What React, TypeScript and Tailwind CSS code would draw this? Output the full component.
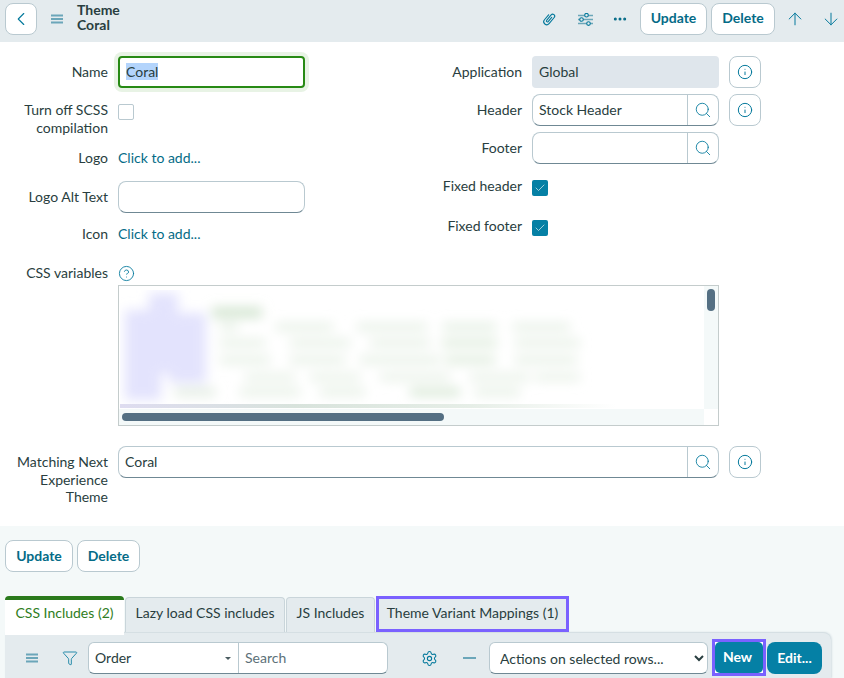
import { ArrowDown, ArrowUp, Check, ChevronLeft, CircleHelp, Ellipsis, Funnel, Info, Search, Settings } from "lucide-react";
import type { ReactNode } from "react";

function MenuIcon() {
  return (
    <svg width="12" height="10" viewBox="0 0 12 10" className="text-[#6ba6b9]" fill="currentColor">
      <rect x="0" y="0.5" width="12" height="2" />
      <rect x="0" y="4" width="12" height="2" />
      <rect x="0" y="7.5" width="12" height="2" />
    </svg>
  );
}

function ClipIcon() {
  return (
    <svg width="16" height="16" viewBox="0 0 16 16" fill="none" stroke="#04799c" strokeWidth="1.1" strokeLinecap="round">
      <path transform="rotate(40 8 8)" d="M5 5V11.5a3 3 0 0 0 6 0V3.5a2 2 0 0 0-4 0V10.5a1 1 0 0 0 2 0V5" />
    </svg>
  );
}

function SlidersIcon() {
  return (
    <svg width="15" height="13" viewBox="0 0 15 13" fill="none">
      <path d="M0 2.5H15M0 6.5H15M0 10.5H15" stroke="#6ba6b9" strokeWidth="1.6" />
      <circle cx="8.5" cy="2.2" r="1.8" fill="#e4ebee" stroke="#04799c" strokeWidth="1.1" />
      <circle cx="3.5" cy="6.5" r="1.8" fill="#e4ebee" stroke="#04799c" strokeWidth="1.1" />
      <circle cx="10.5" cy="10.6" r="1.8" fill="#e4ebee" stroke="#04799c" strokeWidth="1.1" />
    </svg>
  );
}

function Btn({ children, className = "" }: { children: ReactNode; className?: string }) {
  return (
    <button className={`h-8 rounded-lg border border-[#b9c9d0] bg-white text-[14px] font-bold text-[#046b87] ${className}`}>
      {children}
    </button>
  );
}

function InfoBtn() {
  return (
    <div className="flex h-8 w-8 items-center justify-center rounded-lg border border-[#b9c9d0] bg-white">
      <Info size={16} strokeWidth={1.5} className="text-[#04799c]" />
    </div>
  );
}

function Label({ children, className = "" }: { children: ReactNode; className?: string }) {
  return <div className={`w-[108px] shrink-0 text-right leading-[18px] ${className}`}>{children}</div>;
}

function Lookup({ value, className = "" }: { value?: string; className?: string }) {
  return (
    <div className={`flex h-8 rounded-lg border border-[#b9c9d0] border-b-[#6f8894] bg-white ${className}`}>
      <div className="flex-1 px-[6px] leading-[30px]">{value}</div>
      <div className="flex w-[31px] items-center justify-center border-l border-[#b9c9d0]">
        <Search size={18} strokeWidth={1.15} className="text-[#04799c]" />
      </div>
    </div>
  );
}

function CheckedBox() {
  return (
    <div className="mt-[3px] flex h-4 w-4 items-center justify-center rounded-[2px] bg-[#0580a5]">
      <Check size={12} strokeWidth={1.25} className="text-white" />
    </div>
  );
}

const purpleBlobs = [
  [5, 20, 36, 90],
  [29, 3, 29, 20],
  [41, 23, 8, 60],
  [49, 23, 37, 70],
];

const greenBlobs = [
  [92, 17, 50, 11, "#d5e6d3"],
  [100, 33, 18, 8, "#e8f1e7"],
  [156, 33, 57, 8, "#e8f1e7"],
  [237, 33, 70, 8, "#e8f1e7"],
  [323, 33, 53, 8, "#e4efe3"],
  [393, 33, 57, 8, "#e8f1e7"],
  [100, 49, 45, 8, "#e8f1e7"],
  [170, 49, 60, 8, "#e8f1e7"],
  [250, 49, 60, 8, "#e8f1e7"],
  [322, 49, 55, 8, "#dfecdd"],
  [395, 49, 65, 8, "#e8f1e7"],
  [100, 66, 50, 8, "#e8f1e7"],
  [170, 66, 55, 8, "#e8f1e7"],
  [240, 66, 80, 8, "#e8f1e7"],
  [325, 66, 50, 8, "#dfecdd"],
  [395, 66, 62, 8, "#e8f1e7"],
  [125, 83, 50, 8, "#eaf2e9"],
  [190, 83, 50, 8, "#eaf2e9"],
  [260, 83, 70, 8, "#eaf2e9"],
  [350, 83, 60, 8, "#eaf2e9"],
  [415, 83, 45, 8, "#eaf2e9"],
  [55, 98, 40, 8, "#e2ece1"],
  [120, 98, 60, 8, "#e8f1e7"],
  [200, 98, 45, 8, "#e8f1e7"],
  [290, 98, 50, 8, "#d8e8d6"],
  [355, 98, 45, 8, "#e8f1e7"],
] as const;

function BlurredCode() {
  return (
    <svg className="h-[119px] w-[584px]" viewBox="0 0 584 119" fill="none">
      <defs>
        <filter id="blur-code" x="-20%" y="-20%" width="140%" height="140%">
          <feGaussianBlur stdDeviation="6" />
        </filter>
        <linearGradient id="stripe">
          <stop offset="0" stopColor="#dedcf0" />
          <stop offset="0.3" stopColor="#d8e3dc" />
          <stop offset="0.6" stopColor="#e6eee7" />
          <stop offset="0.85" stopColor="#ffffff" />
        </linearGradient>
      </defs>
      <g filter="url(#blur-code)">
        {purpleBlobs.map(([x, y, w, h]) => (
          <rect key={`${x}-${y}`} x={x} y={y} width={w} height={h} fill="#e3e3fd" />
        ))}
        {greenBlobs.map(([x, y, w, h, c]) => (
          <rect key={`${x}-${y}`} x={x} y={y} width={w} height={h} fill={c} />
        ))}
      </g>
      <rect x="0" y="114" width="584" height="4" fill="url(#stripe)" />
    </svg>
  );
}

export default function App() {
  return (
    <div className="h-[678px] w-[844px] overflow-hidden bg-[#f4f9f9] text-[14px] text-[#293e40] [font-family:Lato,sans-serif]">
      {/* Top bar */}
      <div className="flex h-[42px] items-start bg-[#e4ebee] pl-[5px] pt-[3px]">
        <button className="flex h-8 w-8 items-center justify-center rounded-lg border border-[#b9c9d0] bg-white">
          <ChevronLeft size={22} strokeWidth={1.25} className="text-[#04799c]" />
        </button>
        <div className="ml-[14px] mt-[11px]"><MenuIcon /></div>
        <div className="ml-[14px] -mt-[1px] text-[14px] font-bold leading-[15px]">
          <div>Theme</div>
          <div>Coral</div>
        </div>
        <div className="ml-auto flex items-center">
          <ClipIcon />
          <div className="ml-[21px]"><SlidersIcon /></div>
          <Ellipsis size={16} strokeWidth={2.5} className="ml-[19px] text-[#046b87]" />
          <Btn className="ml-[12px] w-[67px] pb-[3px]">Update</Btn>
          <Btn className="ml-[4px] w-[64px] pb-[3px]">Delete</Btn>
          <ArrowUp size={20} strokeWidth={1.2} className="ml-[10px] text-[#04799c]" />
          <ArrowDown size={20} strokeWidth={1.2} className="ml-[16px] mr-[3px] text-[#04799c]" />
        </div>
      </div>

      {/* Form */}
      <div className="h-[484px] bg-white pt-[14px]">
        <div className="flex">
          <div className="w-[414px]">
            <div className="flex items-center gap-[10px]">
              <Label>Name</Label>
              <div className="h-8 w-[187px] rounded-[4px] border-2 border-[#278a14] px-[6px] leading-[28px] shadow-[0_0_0_4px_#e8f3e5]">
                <span className="bg-[#b3d4fc]">Coral</span>
              </div>
            </div>
            <div className="mt-[13px] flex gap-[10px]">
              <Label>Turn off SCSS compilation</Label>
              <div className="mt-[3px] h-4 w-4 rounded-[2px] border border-[#b9c9d0] bg-white" />
            </div>
            <div className="mt-[12px] flex gap-[10px]">
              <Label>Logo</Label>
              <div className="leading-[18px] text-[#046b87]">Click to add...</div>
            </div>
            <div className="mt-[14px] flex items-center gap-[10px]">
              <Label>Logo Alt Text</Label>
              <div className="h-8 w-[187px] rounded-lg border border-[#b9c9d0] border-b-[#6f8894]" />
            </div>
            <div className="mt-[12px] flex gap-[10px]">
              <Label>Icon</Label>
              <div className="leading-[18px] text-[#046b87]">Click to add...</div>
            </div>
          </div>
          <div>
            <div className="flex items-center gap-[10px]">
              <Label>Application</Label>
              <div className="h-8 w-[187px] rounded-[4px] bg-[#dfe6ec] px-[7px] leading-[32px]">Global</div>
              <InfoBtn />
            </div>
            <div className="mt-[6px] flex items-center gap-[10px]">
              <Label>Header</Label>
              <Lookup value="Stock Header" className="w-[187px]" />
              <InfoBtn />
            </div>
            <div className="mt-[6px] flex items-center gap-[10px]">
              <Label>Footer</Label>
              <Lookup className="w-[187px]" />
            </div>
            <div className="mt-[13px] flex gap-[10px]">
              <Label>Fixed header</Label>
              <CheckedBox />
            </div>
            <div className="mt-[21px] flex gap-[10px]">
              <Label>Fixed footer</Label>
              <CheckedBox />
            </div>
          </div>
        </div>

        <div className="mt-[21px] flex items-center gap-[10px]">
          <Label>CSS variables</Label>
          <CircleHelp size={17} strokeWidth={1.25} className="text-[#04799c]" />
        </div>
        <div className="ml-[118px] mt-[3px] flex h-[141px] w-[601px] border border-[#c4cccc]">
          <div className="flex min-w-0 flex-1 flex-col">
            <div className="h-[123px] pl-[1px] pt-[4px]"><BlurredCode /></div>
            <div className="flex flex-1 items-center bg-[#f4f9f9] pl-[3px]">
              <div className="h-2 w-[322px] rounded-full bg-[#546f83]" />
            </div>
          </div>
          <div className="flex w-[14px] flex-col">
            <div className="flex-1 bg-[#f4f9f9] pl-[3px] pt-[3px]">
              <div className="h-[22px] w-2 rounded-full bg-[#546f83]" />
            </div>
            <div className="h-[16px] bg-white" />
          </div>
        </div>

        <div className="mt-[20px] flex gap-[10px]">
          <div className="w-[108px] shrink-0 pt-[7px] text-right leading-[17.5px]">Matching Next Experience Theme</div>
          <Lookup value="Coral" className="w-[601px]" />
          <InfoBtn />
        </div>
      </div>

      {/* Bottom buttons */}
      <div className="flex gap-[4px] pl-[5px] pt-[14px]">
        <Btn className="w-[68px] pb-[2px]">Update</Btn>
        <Btn className="w-[63px] pb-[2px]">Delete</Btn>
      </div>

      {/* Tabs */}
      <div className="ml-[5px] mt-[24px] flex h-9 items-end gap-px">
        <div className="h-9 w-[119px] rounded-t-[4px] border-t-4 border-[#2a7a1c] bg-white pt-[2px] text-center text-[#2f7d22]">
          CSS Includes (2)
        </div>
        <div className="flex h-[35px] w-[160px] items-center justify-center rounded-t-[4px] border border-b-0 border-[#c9d5da] bg-[#e4ebee] pb-[5px]">
          Lazy load CSS includes
        </div>
        <div className="flex h-[35px] w-[89px] items-center justify-center rounded-t-[4px] border border-b-0 border-[#c9d5da] bg-[#e4ebee] pb-[5px]">
          JS Includes
        </div>
        <div className="flex h-9 w-[193px] items-center justify-center border-[3px] border-[#7a61ff] bg-[#e4ebee] pb-[3px]">
          Theme Variant Mappings (1)
        </div>
      </div>

      {/* Related list toolbar */}
      <div className="ml-[5px] h-[46px] w-[826px] rounded-tr-lg border-t border-[#d5dfe3] bg-[#e4ebee] shadow-[1px_0_2px_#d5dfe3]">
        <div className="h-[3px] w-[119px] -translate-y-px bg-white" />
        <div className="flex items-center pt-[6px]">
          <div className="ml-[21px]"><MenuIcon /></div>
          <Funnel size={16} strokeWidth={1.25} className="ml-[24px] text-[#04799c]" />
          <div className="ml-[10px] flex h-8 w-[300px] rounded-[6px] border border-[#b9c9d0] border-b-[#6f8894] bg-white">
            <div className="flex w-[150px] items-center justify-between border-r border-[#b9c9d0] pl-[6px] pr-[7px]">
              <span className="pb-[2px]">Order</span>
              <span className="h-0 w-0 border-x-[3px] border-t-[3px] border-x-transparent border-t-[#4a5c60]" />
            </div>
            <div className="pl-[6px] leading-[30px] text-[#5c7078]">Search</div>
          </div>
          <Settings size={17} strokeWidth={1.5} className="ml-[33px] text-[#04799c]" />
          <div className="ml-[25px] h-[2px] w-[13px] bg-[#6ba6b9]" />
          <select defaultValue="a" className="ml-[13px] h-8 w-[219px] rounded-[6px] border border-[#b9c9d0] border-b-[#6f8894] bg-white pl-[6px]">
            <option value="a">Actions on selected rows...</option>
          </select>
          <div className="-mb-[2px] -mt-[3px] ml-[4px] h-[37px] w-[54px] border-[3px] border-[#7a61ff] bg-white">
            <button className="h-full w-full rounded-[5px] bg-[#0580a5] pb-[2px] pr-[3px] font-bold text-white">New</button>
          </div>
          <button className="ml-[1px] h-8 w-[55px] rounded-lg bg-[#0580a5] pb-[2px] font-bold text-white">Edit...</button>
        </div>
      </div>
    </div>
  );
}
